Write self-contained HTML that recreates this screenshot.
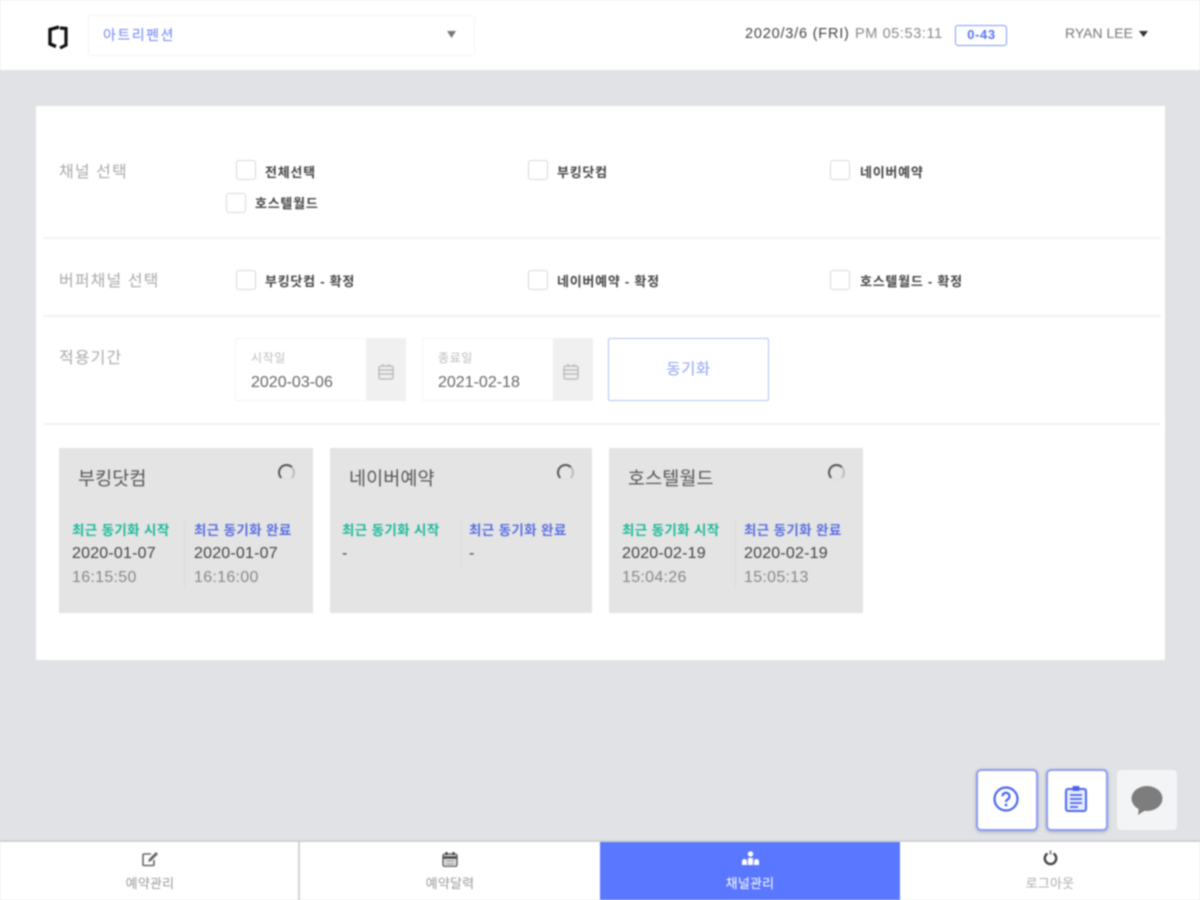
<!DOCTYPE html>
<html lang="ko">
<head>
<meta charset="utf-8">
<title>채널관리</title>
<style>
html,body{margin:0;padding:0;width:1200px;height:900px;overflow:hidden;background:#e0e2e5}
body{font-family:"Liberation Sans","Noto Sans CJK KR",sans-serif;color:#333}
#p{position:absolute;left:0;top:0;width:1200px;height:900px;background:#e0e2e5;filter:blur(.7px);overflow:hidden}
#p div,#p svg{position:absolute}
.t{white-space:nowrap;line-height:1}
.b{background:#fff}
.cb{width:18px;height:18px;border:1px solid #d8d8d8;border-radius:3px;background:#fff}
.cl{font-size:13px;font-weight:700;color:#444;white-space:nowrap;line-height:1;letter-spacing:.75px}
.lab{font-size:16px;color:#aaa;white-space:nowrap;line-height:1;letter-spacing:1.1px}
.hr{left:43px;width:1118px;height:2px;background:#f3f3f3}
.card{background:#e4e4e4;top:448px;height:165px}
.h{font-size:18.5px;color:#555;white-space:nowrap;line-height:1;letter-spacing:.1px}
.g{font-size:13.5px;font-weight:700;color:#1fb99a;white-space:nowrap;line-height:1;letter-spacing:.35px}
.v{font-size:13.5px;font-weight:700;color:#5a6fe0;white-space:nowrap;line-height:1;letter-spacing:.35px}
.d{font-size:16px;color:#444;white-space:nowrap;line-height:1;letter-spacing:.2px}
.m{font-size:16px;color:#888;white-space:nowrap;line-height:1;letter-spacing:.3px}
.sp{width:13px;height:13px;border:2px solid #555;border-bottom-color:#e0e0e0;border-right-color:#bbb;border-radius:50%;top:464px}
.sep{width:1px;background:#dcdcdc}
.nav{top:842px;height:58px;width:300px;background:#fff}
.nl{font-size:13px;color:#999;white-space:nowrap;line-height:1;top:877px;text-align:center;width:300px;letter-spacing:.2px}
.fb{width:58px;height:58px;background:#fff;border:2px solid #8c9df0;border-radius:5px;box-shadow:0 1px 3px rgba(60,70,120,.35);top:769px}
</style>
</head>
<body>
<div id="p">
  <!-- header -->
  <div class="b" style="left:0;top:0;width:1200px;height:70px"></div>
  <svg style="left:46px;top:22px" width="24" height="28" viewBox="0 0 24 28"><path d="M13 5 4 7.500V22l6 2.500" fill="none" stroke="#111" stroke-width="3.400"/><path d="M14 6l6 .5V23l-6 3" fill="none" stroke="#111" stroke-width="3.200"/></svg>
  <div style="left:88px;top:15px;width:385px;height:39px;border:1px solid #f3f3f3;border-radius:3px;background:#fff"></div>
  <div class="t" style="left:103px;top:28px;font-size:14px;color:#6f84f5;letter-spacing:1.500px">아트리펜션</div>
  <svg style="left:447px;top:31px" width="9" height="7" viewBox="0 0 9 7"><path d="M0 0h9L4.500 7z" fill="#777"/></svg>
  <div class="t" style="left:745px;top:27px;font-size:14.500px;color:#444;letter-spacing:.8px">2020/3/6 (FRI)</div>
  <div class="t" style="left:855px;top:27px;font-size:14.500px;color:#888;letter-spacing:.6px">PM 05:53:11</div>
  <div style="left:955px;top:25px;width:50px;height:19px;border:1.500px solid #8097f5;border-radius:3px"></div>
  <div class="t" style="left:955px;top:28px;width:53px;text-align:center;font-size:13px;font-weight:700;color:#5a74f0;letter-spacing:.6px">0-43</div>
  <div class="t" style="left:1065px;top:26px;font-size:14px;color:#777">RYAN LEE</div>
  <svg style="left:1139px;top:31px" width="9" height="6" viewBox="0 0 9 6"><path d="M0 0h9L4.500 6z" fill="#333"/></svg>

  <!-- main panel -->
  <div class="b" style="left:36px;top:106px;width:1129px;height:554px"></div>

  <div class="lab" style="left:59px;top:165px">채널 선택</div>
  <div class="cb" style="left:236px;top:160px"></div><div class="cl" style="left:265px;top:166px">전체선택</div>
  <div class="cb" style="left:528px;top:160px"></div><div class="cl" style="left:557px;top:166px">부킹닷컴</div>
  <div class="cb" style="left:830px;top:160px"></div><div class="cl" style="left:860px;top:166px">네이버예약</div>
  <div class="cb" style="left:226px;top:193px"></div><div class="cl" style="left:255px;top:197px">호스텔월드</div>
  <div class="hr" style="top:237px"></div>

  <div class="lab" style="left:59px;top:274px">버퍼채널 선택</div>
  <div class="cb" style="left:236px;top:270px"></div><div class="cl" style="left:265px;top:275px">부킹닷컴 - 확정</div>
  <div class="cb" style="left:528px;top:270px"></div><div class="cl" style="left:557px;top:275px">네이버예약 - 확정</div>
  <div class="cb" style="left:830px;top:270px"></div><div class="cl" style="left:860px;top:275px">호스텔월드 - 확정</div>
  <div class="hr" style="top:315px"></div>

  <div class="lab" style="left:59px;top:351px">적용기간</div>
  <div style="left:235px;top:338px;width:130px;height:61px;border:1px solid #f4f4f4;border-right:0;background:#fff"></div>
  <div style="left:366px;top:338px;width:40px;height:63px;background:#f0f0f0"></div>
  <div class="t" style="left:251px;top:352px;font-size:12px;color:#bbb;letter-spacing:.6px">시작일</div>
  <div class="t" style="left:251px;top:375px;font-size:16px;color:#666">2020-03-06</div>
  <svg style="left:378px;top:363px" width="16" height="17" viewBox="0 0 16 17"><rect x="1" y="3" width="14" height="13" rx="2" fill="none" stroke="#bbb" stroke-width="1.500"/><path d="M1 7h14M1 11h14M5 1v3M11 1v3" stroke="#bbb" stroke-width="1.500"/></svg>
  <div style="left:422px;top:338px;width:130px;height:61px;border:1px solid #f4f4f4;border-right:0;background:#fff"></div>
  <div style="left:553px;top:338px;width:40px;height:63px;background:#f0f0f0"></div>
  <div class="t" style="left:438px;top:352px;font-size:12px;color:#bbb;letter-spacing:.6px">종료일</div>
  <div class="t" style="left:438px;top:375px;font-size:16px;color:#666">2021-02-18</div>
  <svg style="left:563px;top:363px" width="16" height="17" viewBox="0 0 16 17"><rect x="1" y="3" width="14" height="13" rx="2" fill="none" stroke="#bbb" stroke-width="1.500"/><path d="M1 7h14M1 11h14M5 1v3M11 1v3" stroke="#bbb" stroke-width="1.500"/></svg>
  <div style="left:608px;top:338px;width:159px;height:61px;border:1px solid #b4c0fa;border-radius:2px;background:#fff"></div>
  <div class="t" style="left:608px;top:362px;width:161px;text-align:center;font-size:15.500px;color:#8fa2f5;letter-spacing:.5px">동기화</div>
  <div class="hr" style="top:423px"></div>

  <!-- cards -->
  <div class="card" style="left:59px;width:254px"></div>
  <div class="h" style="left:78px;top:470px">부킹닷컴</div>
  <div class="sp" style="left:278px"></div>
  <div class="g" style="left:72px;top:524px">최근 동기화 시작</div>
  <div class="v" style="left:194px;top:524px">최근 동기화 완료</div>
  <div class="sep" style="left:184px;top:520px;height:68px"></div>
  <div class="d" style="left:72px;top:546px">2020-01-07</div>
  <div class="d" style="left:194px;top:546px">2020-01-07</div>
  <div class="m" style="left:72px;top:570px">16:15:50</div>
  <div class="m" style="left:194px;top:570px">16:16:00</div>

  <div class="card" style="left:330px;width:262px"></div>
  <div class="h" style="left:349px;top:470px">네이버예약</div>
  <div class="sp" style="left:557px"></div>
  <div class="g" style="left:342px;top:524px">최근 동기화 시작</div>
  <div class="v" style="left:469px;top:524px">최근 동기화 완료</div>
  <div class="sep" style="left:461px;top:520px;height:48px"></div>
  <div class="d" style="left:342px;top:546px">-</div>
  <div class="d" style="left:469px;top:546px">-</div>

  <div class="card" style="left:609px;width:254px"></div>
  <div class="h" style="left:628px;top:470px">호스텔월드</div>
  <div class="sp" style="left:828px"></div>
  <div class="g" style="left:622px;top:524px">최근 동기화 시작</div>
  <div class="v" style="left:744px;top:524px">최근 동기화 완료</div>
  <div class="sep" style="left:735px;top:520px;height:68px"></div>
  <div class="d" style="left:622px;top:546px">2020-02-19</div>
  <div class="d" style="left:744px;top:546px">2020-02-19</div>
  <div class="m" style="left:622px;top:570px">15:04:26</div>
  <div class="m" style="left:744px;top:570px">15:05:13</div>

  <!-- floating buttons -->
  <div class="fb" style="left:976px"></div>
  <svg style="left:992px;top:785px" width="28" height="28" viewBox="0 0 28 28"><circle cx="14" cy="14" r="11.500" fill="none" stroke="#4a67ea" stroke-width="2.200"/><path d="M10.500 11.200a3.500 3.500 0 1 1 5.400 3c-1.200.8-1.900 1.400-1.900 2.800" fill="none" stroke="#4a67ea" stroke-width="2.200"/><circle cx="14" cy="20" r="1.400" fill="#4a67ea"/></svg>
  <div class="fb" style="left:1046px"></div>
  <svg style="left:1064px;top:785px" width="24" height="27" viewBox="0 0 24 27"><rect x="2" y="4" width="20" height="22" rx="2" fill="#e8ecfd" stroke="#4a67ea" stroke-width="2"/><rect x="8.500" y="1" width="7" height="5" rx="1" fill="#4a67ea"/><path d="M6 10h12M6 14h12M6 18h12M6 22h8" stroke="#4a67ea" stroke-width="1.700"/></svg>
  <div style="left:1117px;top:770px;width:60px;height:60px;background:#f3f4f6;border-radius:4px"></div>
  <svg style="left:1130px;top:784px" width="34" height="32" viewBox="0 0 34 32"><ellipse cx="17" cy="14.500" rx="15.500" ry="12.500" fill="#7d7d7d"/><path d="M9 23l-1 8 9-6z" fill="#7d7d7d"/></svg>

  <!-- bottom nav -->
  <div style="left:0;top:840px;width:1200px;height:2px;background:#cfd1d4"></div>
  <div class="nav" style="left:0"></div>
  <div class="nav" style="left:300px"></div>
  <div style="left:298px;top:842px;width:2px;height:58px;background:#d4d4d4"></div>
  <div class="nav" style="left:600px;background:#5a78ff"></div>
  <div class="nav" style="left:900px"></div>
  <svg style="left:141px;top:851px" width="18" height="16" viewBox="0 0 18 16"><path d="M13 9v4.500a1 1 0 0 1-1 1H3a1 1 0 0 1-1-1V4a1 1 0 0 1 1-1h7" fill="none" stroke="#666" stroke-width="1.600"/><path d="M7 11l1-3 7-7 2 2-7 7z" fill="#666"/></svg>
  <svg style="left:442px;top:851px" width="16" height="16" viewBox="0 0 16 16"><rect x="1" y="3" width="14" height="12.500" rx="2" fill="#ddd" stroke="#666" stroke-width="1.500"/><path d="M1 6.500h14" stroke="#444" stroke-width="2.500"/><path d="M4.500 1v3M11.500 1v3" stroke="#333" stroke-width="1.800"/><path d="M4 10h8M4 13h8" stroke="#999"/></svg>
  <svg style="left:742px;top:851px" width="17" height="15" viewBox="0 0 17 15"><circle cx="8.500" cy="3" r="2.700" fill="#fff"/><path d="M6 7h5v7H6zM0 10.500a2.500 2.500 0 0 1 5 0V14H0zM12 10.500a2.500 2.500 0 0 1 5 0V14h-5z" fill="#fff"/></svg>
  <svg style="left:1042px;top:850px" width="17" height="17" viewBox="0 0 17 17"><path d="M5.500 3.500a5.700 5.700 0 1 0 6 0" fill="none" stroke="#444" stroke-width="2.400"/><path d="M8.500 .500v4" stroke="#888" stroke-width="2"/></svg>
  <div class="nl" style="left:0">예약관리</div>
  <div class="nl" style="left:300px">예약달력</div>
  <div class="nl" style="left:600px;color:#fff">채널관리</div>
  <div class="nl" style="left:900px;color:#aaa">로그아웃</div>
</div>
</body>
</html>
